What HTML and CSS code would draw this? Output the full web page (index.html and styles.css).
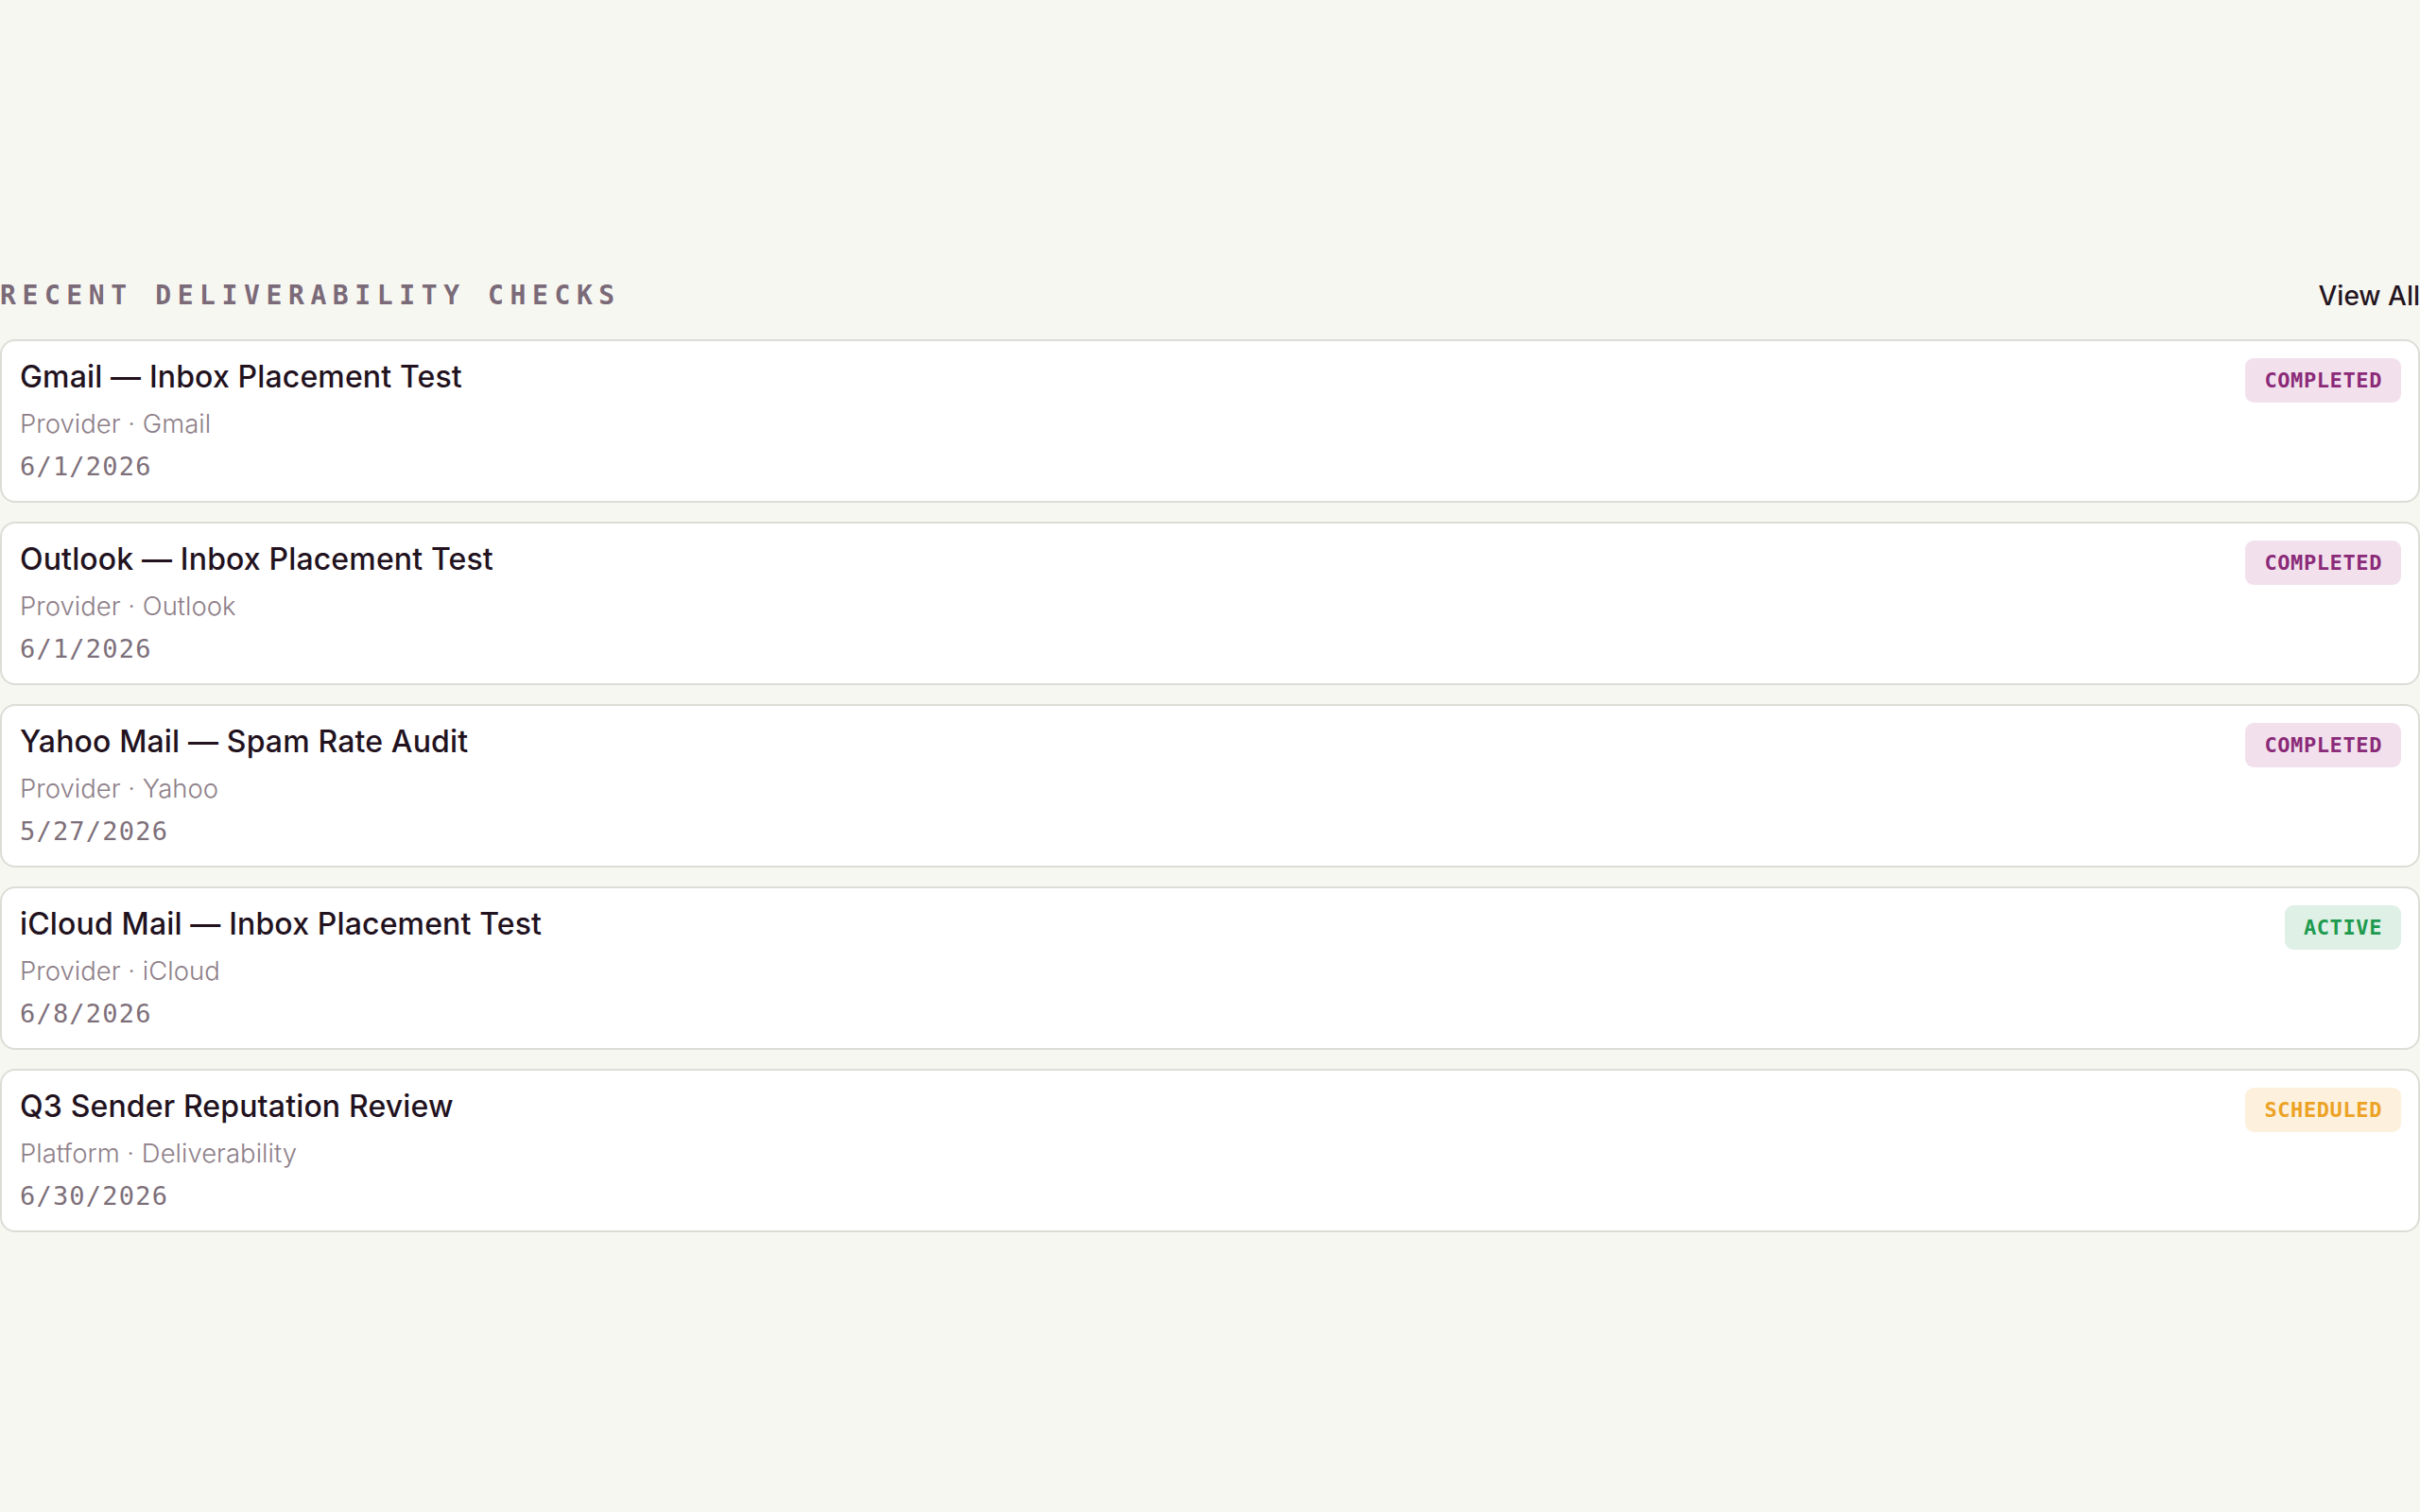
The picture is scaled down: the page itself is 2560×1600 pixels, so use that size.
FILE: index.html
```html
<!DOCTYPE html>
<html lang="en">
<head>
<meta charset="utf-8">
<title>Recent Deliverability Checks</title>
<link rel="stylesheet" href="styles.css">
</head>
<body>
<main class="page">
  <section class="checks">
    <header class="checks-head">
      <h2 class="checks-title">Recent Deliverability Checks</h2>
      <a class="view-all" href="#">View All</a>
    </header>
    <ul class="check-list">
      <li class="check-card">
        <div class="check-info">
          <h3 class="check-name">Gmail — Inbox Placement Test</h3>
          <p class="check-meta">Provider · Gmail</p>
          <p class="check-date">6/1/2026</p>
        </div>
        <span class="badge badge-completed">Completed</span>
      </li>
      <li class="check-card">
        <div class="check-info">
          <h3 class="check-name">Outlook — Inbox Placement Test</h3>
          <p class="check-meta">Provider · Outlook</p>
          <p class="check-date">6/1/2026</p>
        </div>
        <span class="badge badge-completed">Completed</span>
      </li>
      <li class="check-card">
        <div class="check-info">
          <h3 class="check-name">Yahoo Mail — Spam Rate Audit</h3>
          <p class="check-meta">Provider · Yahoo</p>
          <p class="check-date">5/27/2026</p>
        </div>
        <span class="badge badge-completed">Completed</span>
      </li>
      <li class="check-card">
        <div class="check-info">
          <h3 class="check-name">iCloud Mail — Inbox Placement Test</h3>
          <p class="check-meta">Provider · iCloud</p>
          <p class="check-date">6/8/2026</p>
        </div>
        <span class="badge badge-active">Active</span>
      </li>
      <li class="check-card">
        <div class="check-info">
          <h3 class="check-name">Q3 Sender Reputation Review</h3>
          <p class="check-meta">Platform · Deliverability</p>
          <p class="check-date">6/30/2026</p>
        </div>
        <span class="badge badge-scheduled">Scheduled</span>
      </li>
    </ul>
  </section>
</main>
</body>
</html>
```
FILE: styles.css
```css
* {
  box-sizing: border-box;
}

html,
body {
  margin: 0;
  padding: 0;
  background: #f7f7f2;
}

body {
  font-family: Inter, "Noto Sans", "Liberation Sans", sans-serif;
  color: #241420;
  min-height: 1600px;
}

.page {
  padding-top: 296px;
}

.checks-head {
  display: flex;
  align-items: center;
  justify-content: space-between;
  margin-bottom: 29px;
}

.checks-title {
  margin: 0;
  font-family: "DejaVu Sans Mono", "Liberation Mono", monospace;
  font-weight: 700;
  font-size: 28px;
  line-height: 34px;
  letter-spacing: 6.6px;
  text-transform: uppercase;
  color: #7b6a78;
}

.view-all {
  font-size: 28px;
  font-weight: 500;
  line-height: 34px;
  color: #241420;
  text-decoration: none;
}

.check-list {
  list-style: none;
  margin: 0;
  padding: 0;
  display: flex;
  flex-direction: column;
  gap: 20px;
}

.check-card {
  display: flex;
  justify-content: space-between;
  align-items: flex-start;
  height: 173px;
  padding: 18px;
  padding-left: 19px;
  background: #ffffff;
  border: 2px solid #dedcd6;
  border-radius: 16px;
}

.check-info {
  display: flex;
  flex-direction: column;
}

.check-name {
  margin: 0;
  font-size: 32px;
  font-weight: 500;
  line-height: 39px;
  letter-spacing: 0.15px;
  color: #22121e;
}

.check-meta {
  margin: 12px 0 0;
  font-size: 27.5px;
  font-weight: 300;
  line-height: 36px;
  color: #8e8089;
}

.check-date {
  margin: 10px 0 0;
  font-family: "DejaVu Sans Mono", "Liberation Mono", monospace;
  font-size: 27px;
  line-height: 36px;
  letter-spacing: 1.2px;
  color: #7d6f79;
}

.badge {
  flex: none;
  padding: 10px 20px;
  border-radius: 9px;
  font-family: "DejaVu Sans Mono", "Liberation Mono", monospace;
  font-weight: 700;
  font-size: 22px;
  line-height: 27px;
  letter-spacing: 0.6px;
  text-transform: uppercase;
}

.badge-completed {
  background: #f2e1ed;
  color: #8b2a78;
}

.badge-active {
  background: #dff0e6;
  color: #1d9a4e;
}

.badge-scheduled {
  background: #fdf0dd;
  color: #eca224;
}
```
